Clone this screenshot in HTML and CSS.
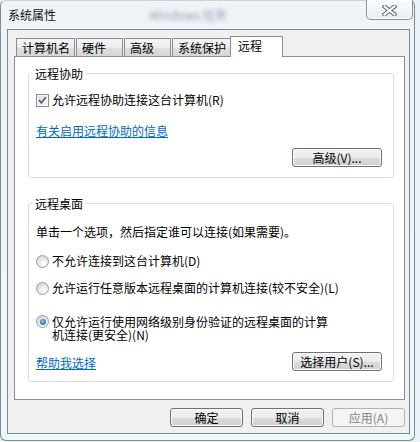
FILE: index.html
```html
<!DOCTYPE html>
<html lang="zh-CN">
<head>
<meta charset="utf-8">
<title>系统属性</title>
<link rel="stylesheet" href="styles.css">
</head>
<body>
<div class="window">
  <div class="titlebar">
    <span class="title">系统属性</span>
    <span class="ghost">Windows 任务</span>
    <span class="spacer"></span>
    <div class="close">
      <svg width="15" height="11" viewBox="0 0 15 11">
        <path d="M2.5 1.5 L12.5 9.5 M12.5 1.5 L2.5 9.5" stroke="#6b7379" stroke-width="4.2" stroke-linecap="square" fill="none"/>
        <path d="M2.5 1.5 L12.5 9.5 M12.5 1.5 L2.5 9.5" stroke="#ffffff" stroke-width="2" stroke-linecap="square" fill="none"/>
      </svg>
    </div>
  </div>
  <div class="client">
    <div class="tabs">
      <div class="tab">计算机名</div>
      <div class="tab">硬件</div>
      <div class="tab">高级</div>
      <div class="tab">系统保护</div>
      <div class="tab active">远程</div>
    </div>
    <div class="panel">
      <fieldset class="group g1">
        <legend>远程协助</legend>
        <label class="opt">
          <span class="chk">
            <svg width="11" height="11" viewBox="0 0 11 11"><path d="M2 5.2 L4.4 7.8 L8.8 2.2" stroke="#4a5a86" stroke-width="1.7" fill="none"/></svg>
          </span>
          <span>允许远程协助连接这台计算机(R)</span>
        </label>
        <a class="link l1">有关启用远程协助的信息</a>
        <div class="btnrow end">
          <div class="btn wide">高级(V)...</div>
        </div>
      </fieldset>
      <fieldset class="group g2">
        <legend>远程桌面</legend>
        <p class="desc">单击一个选项，然后指定谁可以连接(如果需要)。</p>
        <label class="opt r1"><span class="radio"></span><span>不允许连接到这台计算机(D)</span></label>
        <label class="opt r2"><span class="radio"></span><span>允许运行任意版本远程桌面的计算机连接(较不安全)(L)</span></label>
        <label class="opt r3"><span class="radio on"></span><span class="multi">仅允许运行使用网络级别身份验证的远程桌面的计算机连接(更安全)(N)</span></label>
        <div class="btnrow between">
          <a class="link l2">帮助我选择</a>
          <div class="btn wide">选择用户(S)...</div>
        </div>
      </fieldset>
    </div>
    <div class="actions">
      <div class="btn act">确定</div>
      <div class="btn act">取消</div>
      <div class="btn act disabled">应用(A)</div>
    </div>
  </div>
</div>
</body>
</html>
```
FILE: styles.css
```css
html, body {
  margin: 0;
  padding: 0;
}
body {
  width: 420px;
  height: 442px;
  background: #e9f2f7;
  font-family: "Noto Sans CJK SC", "Noto Sans", sans-serif;
  font-size: 12px;
  color: #000;
  overflow: hidden;
}
.window {
  box-sizing: border-box;
  width: 415px;
  height: 441px;
  border: 1px solid #7d8b92;
  border-top-color: #c9d3d9;
  border-radius: 6px;
  padding: 0 4px 6px 6px;
  background: linear-gradient(#f1f4f7 0, #edf3f7 30px, #edf8fb 100%);
  display: flex;
  flex-direction: column;
}
.titlebar {
  height: 28px;
  display: flex;
  align-items: flex-start;
}
.title {
  padding: 7px 0 0 1px;
  line-height: 14px;
  font-size: 12px;
  color: #111;
}
.ghost {
  margin-left: 93px;
  padding-top: 7px;
  line-height: 14px;
  font-size: 12px;
  color: transparent;
  text-shadow: 0 0 4px rgba(70, 90, 130, 0.55);
}
.spacer { flex: 1; }
.close {
  box-sizing: border-box;
  width: 47px;
  height: 20px;
  margin: -1px -3px 0 0;
  border: 1px solid #858e95;
  border-top: none;
  border-radius: 0 0 5px 5px;
  background: linear-gradient(#fbfcfd, #e9edf0);
  box-shadow: inset 0 0 0 1px rgba(255,255,255,0.8);
  display: flex;
  align-items: center;
  justify-content: center;
  padding-top: 1px;
}
.close svg { display: block; }
.client {
  box-sizing: border-box;
  height: 405px;
  border: 1px solid #7a878e;
  background: #f0f0f0;
  padding: 6px 4px 0 6px;
  display: flex;
  flex-direction: column;
}
.tabs {
  height: 20px;
  display: flex;
  align-items: flex-end;
  gap: 1px;
  padding-left: 2px;
}
.tab {
  position: relative;
  box-sizing: border-box;
  height: 18px;
  min-width: 47px;
  padding: 0 4px 0 5px;
  border: 1px solid #898c95;
  border-bottom: none;
  line-height: 17px;
  background: linear-gradient(#f5f5f5 0%, #ececec 50%, #e0e0e0 51%, #d6d6d6 100%);
  white-space: nowrap;
}
.tab.active {
  height: 21px;
  min-width: 53px;
  margin: 0 -2px -1px -2px;
  padding: 0 4px 0 7px;
  line-height: 18px;
  background: #fff;
  z-index: 1;
}
.panel {
  box-sizing: border-box;
  height: 344px;
  border: 1px solid #898c95;
  background: #fff;
  padding: 10px 10px 0 13px;
}
.group {
  margin: 0;
  min-width: 0;
  border: 1px solid #d5dfe5;
  border-radius: 3px;
  padding: 12px 11px 10px 7px;
}
.group legend {
  padding: 0 3px;
  margin-left: -4px;
  line-height: 13px;
  font-size: 12px;
}
.g2 { margin-top: 19px; padding-top: 14px; }
.opt {
  display: flex;
  align-items: center;
  gap: 3px;
  line-height: 16px;
  white-space: nowrap;
}
.chk {
  box-sizing: border-box;
  width: 13px;
  height: 13px;
  border: 1px solid #8e8f8f;
  background: linear-gradient(135deg, #d6d6d6 0%, #eeeeee 55%, #fbfbfb 100%);
  box-shadow: inset 0 0 0 1px #f6f6f6;
  display: flex;
  align-items: center;
  justify-content: center;
  flex: none;
}
.chk svg { display: block; }
.radio {
  box-sizing: border-box;
  width: 13px;
  height: 13px;
  border-radius: 50%;
  border: 1px solid #9c9c9c;
  background: radial-gradient(circle at 62% 68%, #ffffff 0%, #ececec 40%, #cacaca 100%);
  display: flex;
  align-items: center;
  justify-content: center;
  flex: none;
}
.radio.on::after {
  content: "";
  width: 6px;
  height: 6px;
  border-radius: 50%;
  background: radial-gradient(circle at 45% 40%, #a9d0f5 0%, #3f86cf 45%, #154f91 100%);
}
.link {
  display: block;
  width: fit-content;
  color: #0066cc;
  text-decoration: underline;
  line-height: 16px;
  cursor: pointer;
}
.l1 { margin-top: 15px; }
.btnrow {
  display: flex;
  align-items: center;
  margin-top: 9px;
}
.btnrow.end { justify-content: flex-end; }
.btnrow.between { justify-content: space-between; margin-top: 11px; }
.l2 { padding-top: 2px; }
.btn {
  box-sizing: border-box;
  height: 19px;
  border: 1px solid #707070;
  border-radius: 3px;
  background: linear-gradient(#f2f2f2 0%, #ebebeb 50%, #dddddd 51%, #cfcfcf 100%);
  box-shadow: inset 0 0 0 1px #fbfbfb;
  display: flex;
  align-items: center;
  justify-content: center;
  line-height: 17px;
  white-space: nowrap;
}
.wide { width: 90px; }
.desc {
  margin: 0;
  line-height: 16px;
}
.r1 { margin-top: 13px; }
.r2 { margin-top: 11px; }
.r3 {
  margin-top: 19px;
  align-items: flex-start;
  white-space: normal;
}
.multi {
  max-width: 282px;
  line-height: 13px;
}
.actions {
  display: flex;
  justify-content: flex-end;
  gap: 8px;
  margin-top: 8px;
}
.act { width: 73px; }
.btn.disabled {
  border-color: #adb2b5;
  background: #f4f4f4;
  box-shadow: none;
  color: #838383;
}
```
